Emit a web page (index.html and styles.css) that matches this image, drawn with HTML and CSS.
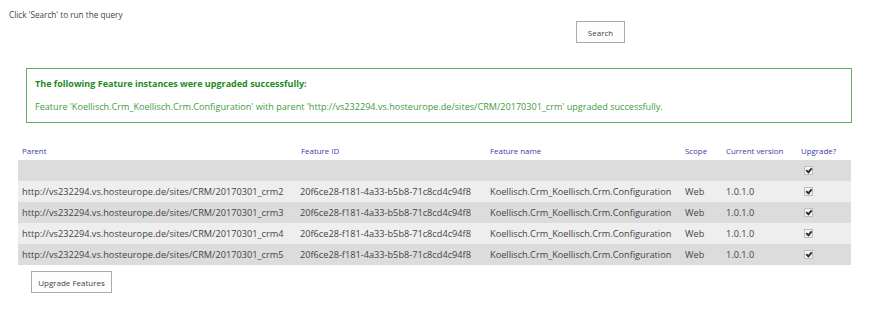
FILE: index.html
```html
<!DOCTYPE html>
<html lang="en">
<head>
    <meta charset="UTF-8">
    <title>Upgrade Features</title>
    <link rel="stylesheet" href="styles.css">
</head>
<body>
    <div class="page">
        <div class="hint">Click 'Search' to run the query</div>

        <div class="search-row">
            <button class="btn btn-search">Search</button>
        </div>

        <div class="result-box">
            <div class="result-title">The following Feature instances were upgraded successfully:</div>
            <div class="result-line">Feature 'Koellisch.Crm_Koellisch.Crm.Configuration' with parent 'http://vs232294.vs.hosteurope.de/sites/CRM/20170301_crm' upgraded successfully.</div>
        </div>

        <table class="features">
            <colgroup>
                <col class="c-parent">
                <col class="c-id">
                <col class="c-name">
                <col class="c-scope">
                <col class="c-ver">
                <col class="c-up">
            </colgroup>
            <thead>
                <tr>
                    <th>Parent</th>
                    <th>Feature ID</th>
                    <th>Feature name</th>
                    <th>Scope</th>
                    <th>Current version</th>
                    <th>Upgrade?</th>
                </tr>
            </thead>
            <tbody>
                <tr class="dark">
                    <td></td><td></td><td></td><td></td><td></td>
                    <td><span class="check"></span></td>
                </tr>
                <tr class="light">
                    <td>http://vs232294.vs.hosteurope.de/sites/CRM/20170301_crm2</td>
                    <td>20f6ce28-f181-4a33-b5b8-71c8cd4c94f8</td>
                    <td>Koellisch.Crm_Koellisch.Crm.Configuration</td>
                    <td>Web</td>
                    <td>1.0.1.0</td>
                    <td><span class="check"></span></td>
                </tr>
                <tr class="dark">
                    <td>http://vs232294.vs.hosteurope.de/sites/CRM/20170301_crm3</td>
                    <td>20f6ce28-f181-4a33-b5b8-71c8cd4c94f8</td>
                    <td>Koellisch.Crm_Koellisch.Crm.Configuration</td>
                    <td>Web</td>
                    <td>1.0.1.0</td>
                    <td><span class="check"></span></td>
                </tr>
                <tr class="light">
                    <td>http://vs232294.vs.hosteurope.de/sites/CRM/20170301_crm4</td>
                    <td>20f6ce28-f181-4a33-b5b8-71c8cd4c94f8</td>
                    <td>Koellisch.Crm_Koellisch.Crm.Configuration</td>
                    <td>Web</td>
                    <td>1.0.1.0</td>
                    <td><span class="check"></span></td>
                </tr>
                <tr class="dark">
                    <td>http://vs232294.vs.hosteurope.de/sites/CRM/20170301_crm5</td>
                    <td>20f6ce28-f181-4a33-b5b8-71c8cd4c94f8</td>
                    <td>Koellisch.Crm_Koellisch.Crm.Configuration</td>
                    <td>Web</td>
                    <td>1.0.1.0</td>
                    <td><span class="check"></span></td>
                </tr>
            </tbody>
        </table>

        <div class="upgrade-row">
            <button class="btn btn-upgrade">Upgrade Features</button>
        </div>
    </div>
</body>
</html>
```

FILE: styles.css
```css
body {
    margin: 0;
    padding: 0;
    background: #fff;
    font-family: "Open Sans", "Noto Sans", sans-serif;
    color: #444;
}

.page {
    width: 870px;
}

.hint {
    font-size: 8.2px;
    line-height: 12px;
    padding: 9px 0 0 9px;
    color: #444;
}

.search-row {
    padding: 0 0 0 576px;
}

.btn {
    display: block;
    font-family: "Open Sans", "Noto Sans", sans-serif;
    font-size: 8px;
    color: #444;
    background: #fdfdfd;
    border: 1px solid #ababab;
    height: 22px;
    padding: 0;
    margin: 0;
}

.btn-search {
    width: 49px;
}

.btn-upgrade {
    width: 81px;
}

.result-box {
    margin: 25px 18px 0 26px;
    border: 1px solid #5fb05f;
    height: 53px;
    padding: 0 0 0 8px;
}

.result-title {
    font-weight: bold;
    font-size: 9px;
    color: #1f8a1f;
    padding-top: 8px;
    line-height: 14px;
}

.result-line {
    font-size: 9.1px;
    color: #3f9a3f;
    padding-top: 9px;
    line-height: 14px;
}

.features {
    margin: 19px 0 0 18px;
    border-collapse: collapse;
    table-layout: fixed;
    width: 833px;
    font-size: 9.2px;
}

.c-parent { width: 279px; }
.c-id { width: 189px; }
.c-name { width: 195px; }
.c-scope { width: 41px; }
.c-ver { width: 75px; }
.c-up { width: 54px; }

.features th {
    font-weight: normal;
    font-size: 7.9px;
    color: #3b3bab;
    text-align: left;
    padding: 0 0 0 4px;
    height: 18px;
    vertical-align: middle;
}

.features td {
    height: 21px;
    padding: 0 0 0 4px;
    white-space: nowrap;
    overflow: hidden;
    color: #444;
}

.features td:nth-child(2) {
    padding-left: 3px;
}

.dark { background: #dcdcdc; }
.light { background: #eeeeee; }

.check {
    display: block;
    width: 7px;
    height: 7px;
    margin-left: 3px;
    border: 1px solid #bdbdbd;
    background: #f4f4f4;
    position: relative;
}

.check::after {
    content: "";
    position: absolute;
    left: 2px;
    top: 0;
    width: 2px;
    height: 4px;
    border: solid #333;
    border-width: 0 2px 2px 0;
    transform: rotate(40deg);
}

.upgrade-row {
    padding: 6px 0 0 31px;
}
```
